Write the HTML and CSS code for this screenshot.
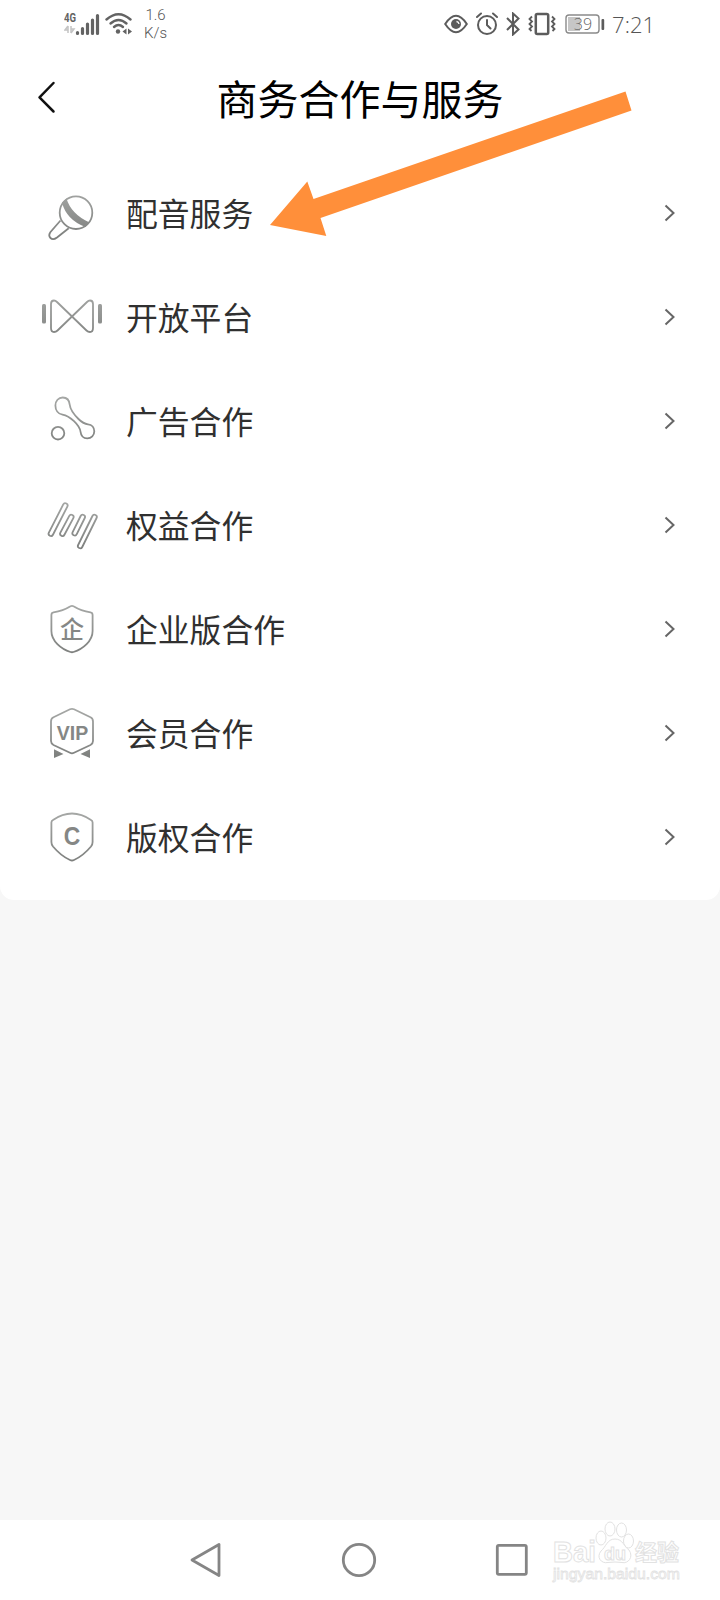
FILE: index.html
```html
<!DOCTYPE html>
<html lang="zh-CN">
<head>
  <meta charset="UTF-8">
  <title>商务合作与服务</title>
  <link rel="stylesheet" href="styles.css">
</head>
<body>
  <svg class="defs" width="0" height="0">
    <defs>
      <linearGradient id="metal" gradientUnits="userSpaceOnUse" x1="0" y1="6" x2="0" y2="58">
        <stop offset="0" stop-color="#a6a8a6"/>
        <stop offset="1" stop-color="#7c7e7c"/>
      </linearGradient>
    </defs>
  </svg>

  <div class="card">
    <div class="status">
      <div class="status-left">
        <svg width="36" height="26" viewBox="0 0 36 26">
          <text class="net" x="0" y="11" textLength="12" lengthAdjust="spacingAndGlyphs">4G</text>
          <path d="M4 15v7M4 15l-3 4h3M7 15v7M7 22l3-4h-3" fill="none" stroke="#c4c4c4" stroke-width="1.5"/>
          <path d="M13.500 21.500v1M18.500 17.500v5M23.500 13v9.500M28.500 9v13.500M33.500 4.500v18" fill="none" stroke="#636363" stroke-width="3.200" stroke-linecap="round"/>
        </svg>
        <svg class="wifi" width="28" height="24" viewBox="0 0 28 24">
          <g fill="none" stroke="#636363" stroke-width="2.400" stroke-linecap="round">
            <path d="M1.500 7.500Q13.500-3 25.500 7.500"/>
            <path d="M5.500 11.500Q13.500 4.500 21.500 11.500"/>
            <path d="M9 15Q13.500 11 18 15"/>
          </g>
          <circle cx="13" cy="19.500" r="2.200" fill="#636363"/>
          <path d="M21.500 16.500v6l-4-3zM23 16.500v6l4-3z" fill="#636363"/>
        </svg>
        <div class="speed">1.6<br>K/s</div>
      </div>
      <div class="status-right">
        <svg width="24" height="20" viewBox="0 0 24 20" fill="none" stroke="#5c5c5c">
          <path d="M1.200 10Q12-6.500 22.800 10Q12 26.500 1.200 10z" stroke-width="2"/>
          <circle cx="12" cy="10" r="5" fill="#5c5c5c" stroke="none"/>
          <path d="M12.500 7.500a3 3 0 0 1 2.500 2.500" stroke="#fff" stroke-width="1.300"/>
        </svg>
        <svg width="22" height="24" viewBox="0 0 22 24" fill="none" stroke="#5c5c5c" stroke-width="2" stroke-linecap="round">
          <circle cx="11" cy="13" r="9"/>
          <path d="M11 8v5l3.500 3.500M1 5l4-3.500M21 5l-4-3.500"/>
        </svg>
        <svg width="14" height="24" viewBox="0 0 14 24" fill="none" stroke="#5c5c5c" stroke-width="2">
          <path d="M1 6l11.500 11.500L7 22.500V1.500l5.500 5L1 18"/>
        </svg>
        <svg width="28" height="24" viewBox="0 0 28 24" fill="none" stroke="#5c5c5c">
          <rect x="7.800" y="2" width="12.400" height="20" rx="1.500" stroke-width="2.500"/>
          <path d="M4 4.500l-2.500 2.500L4 9.500l-2.500 2.500L4 14.500l-2.500 2.500L3.500 19M24 4.500l2.500 2.500L24 9.500l2.500 2.500L24 14.500l2.500 2.500L24.500 19" stroke-width="1.800"/>
        </svg>
        <svg class="battery" width="40" height="20" viewBox="0 0 40 20">
          <rect x="3" y="3" width="12" height="14" fill="#c6c6c6"/>
          <rect x="1" y="1" width="33" height="18" rx="3" fill="none" stroke="#8a8a8a" stroke-width="1.400"/>
          <rect x="36.500" y="5" width="2.700" height="11" rx="1" fill="#5c5c5c"/>
          <text class="level" x="18" y="15.500" text-anchor="middle">39</text>
        </svg>
        <span class="time">7:21</span>
      </div>
    </div>

    <div class="header">
      <svg class="back" width="20" height="34" viewBox="0 0 20 34">
        <path d="M17.500 3L3.500 17.300L17.500 31.500" fill="none" stroke="#111" stroke-width="2.500" stroke-linecap="round" stroke-linejoin="round"/>
      </svg>
      <h1>商务合作与服务</h1>
    </div>

    <ul class="list">
      <li>
        <svg class="icon" viewBox="0 0 64 64">
          <circle cx="36" cy="30.700" r="16.300"/>
          <path class="solid" d="M26.500 16.500Q31 32 49.500 40.500L45.500 45Q26.500 38 22 20.500z"/>
          <path d="M20.500 38.500L10.500 50Q8 53.500 10.500 56Q13 58.500 17 55.500L28.700 46.200"/>
        </svg>
        <span class="name">配音服务</span>
        <svg class="more" viewBox="0 0 12 18"><path d="M1.500 1.500L9.500 9L1.500 16.500"/></svg>
      </li>
      <li>
        <svg class="icon" viewBox="0 0 64 64">
          <rect class="solid" x="2" y="18" width="4" height="19.500" rx="1.500"/>
          <rect class="solid" x="58" y="18" width="4" height="19.500" rx="1.500"/>
          <path d="M11 18Q11 14.500 14 14.500Q15.500 14.500 17 16L46.500 44.500Q48 46 50 46Q53 46 53 42V18Q53 14.500 50 14.500Q48.500 14.500 47 16L17.500 44.500Q16 46 14 46Q11 46 11 42z"/>
        </svg>
        <span class="name">开放平台</span>
        <svg class="more" viewBox="0 0 12 18"><path d="M1.500 1.500L9.500 9L1.500 16.500"/></svg>
      </li>
      <li>
        <svg class="icon" viewBox="0 0 64 64">
          <circle cx="18" cy="43.200" r="6.300"/>
          <path d="M29.800 15C30.300 20 34 24.500 38.500 29C42 32.500 44.500 34 48 34.300C52 34.700 54.300 37.800 54.300 41.300C54.300 45.300 51.300 48.300 47.300 48.300C43.300 48.300 41 45.500 40.600 42C40 37.500 37.500 34.500 34 31.200C30 27.300 26.500 25.200 22.500 24.600C18 24 15.400 20 15.400 15.500C15.400 10.800 18.500 7.500 22.700 7.500C26.700 7.500 29.400 10.500 29.800 15z"/>
        </svg>
        <span class="name">广告合作</span>
        <svg class="more" viewBox="0 0 12 18"><path d="M1.500 1.500L9.500 9L1.500 16.500"/></svg>
      </li>
      <li>
        <svg class="icon" viewBox="0 0 64 64">
          <path class="bar" d="M25.300 11.500L10.900 39.700M31.300 23L22.400 39.700M42.700 23L34.700 39.200M54.500 23L40.200 52"/>
          <path class="bar-gap" d="M25.300 11.500L10.900 39.700M31.300 23L22.400 39.700M42.700 23L34.700 39.200M54.500 23L40.200 52"/>
        </svg>
        <span class="name">权益合作</span>
        <svg class="more" viewBox="0 0 12 18"><path d="M1.500 1.500L9.500 9L1.500 16.500"/></svg>
      </li>
      <li>
        <svg class="icon" viewBox="0 0 64 64">
          <path d="M30.500 8.300Q32 7.300 33.500 8.300Q41 13 50.500 14.300Q52.600 14.600 52.600 17V33C52.600 43 43 51 33.500 54Q32 54.500 30.500 54C21 51 11.400 43 11.400 33V17Q11.400 14.600 13.500 14.300Q23 13 30.500 8.300z"/>
          <text class="mark-cn" x="32" y="39.500" text-anchor="middle">企</text>
        </svg>
        <span class="name">企业版合作</span>
        <svg class="more" viewBox="0 0 12 18"><path d="M1.500 1.500L9.500 9L1.500 16.500"/></svg>
      </li>
      <li>
        <svg class="icon" viewBox="0 0 64 64">
          <path d="M30 7.300Q32 6.300 34 7.300L50.500 15.300Q53 16.500 53 19.500V39Q53 41.500 50.500 43L34 50.800Q32 51.800 30 50.800L13.500 43Q11 41.500 11 39V19.500Q11 16.500 13.500 15.300z"/>
          <text class="mark-vip" x="32.500" y="38" text-anchor="middle">VIP</text>
          <path class="solid" d="M14 47.300L23.500 52L14 56zM50 47.300L40.500 52L50 56z"/>
        </svg>
        <span class="name">会员合作</span>
        <svg class="more" viewBox="0 0 12 18"><path d="M1.500 1.500L9.500 9L1.500 16.500"/></svg>
      </li>
      <li>
        <svg class="icon" viewBox="0 0 64 64">
          <path d="M11.400 16.500Q11.400 14.800 13 14Q32 1 51 14Q52.600 14.800 52.600 16.500V36Q52.600 38.500 51 40.500Q43 50 34 54Q32 55 30 54Q21 50 13 40.500Q11.400 38.500 11.400 36z"/>
          <text class="mark-c" x="32" y="38.800" text-anchor="middle" textLength="16.500" lengthAdjust="spacingAndGlyphs">C</text>
        </svg>
        <span class="name">版权合作</span>
        <svg class="more" viewBox="0 0 12 18"><path d="M1.500 1.500L9.500 9L1.500 16.500"/></svg>
      </li>
    </ul>
  </div>

  <div class="navbar">
    <svg width="34" height="38" viewBox="0 0 34 38"><path d="M3 19L30 3.500V34.500z"/></svg>
    <svg width="38" height="38" viewBox="0 0 38 38"><circle cx="19" cy="19" r="15.700"/></svg>
    <svg width="34" height="34" viewBox="0 0 34 34"><rect x="2.300" y="2.300" width="29" height="29" rx="1.500"/></svg>
  </div>

  <svg class="arrow" width="366" height="150" viewBox="268 89 366 150">
    <path d="M270 225L307.300 181.500L313.500 199L625.500 91.500L631.500 110.500L320.500 218L326.300 236z" fill="#ff8f3a"/>
  </svg>

  <svg class="watermark" width="132" height="66" viewBox="550 1520 132 66">
    <text class="wm-logo" x="553" y="1562" textLength="43" lengthAdjust="spacingAndGlyphs">Bai</text>
    <ellipse cx="601" cy="1538" rx="5" ry="7"/>
    <ellipse cx="610" cy="1529" rx="5" ry="7"/>
    <ellipse cx="621.500" cy="1530" rx="5" ry="7"/>
    <ellipse cx="628.500" cy="1541" rx="5" ry="7"/>
    <path d="M615 1539C623 1539 624 1547 629 1550C634 1557 628 1564 622 1562.500Q615 1561.500 608 1562.500C601 1564 596 1557 601 1551C606 1547 607 1539 615 1539z"/>
    <text class="wm-du" x="604" y="1560" textLength="22" lengthAdjust="spacingAndGlyphs">du</text>
    <text class="wm-cn" x="635" y="1560">经验</text>
    <text class="wm-url" x="553" y="1579" textLength="127" lengthAdjust="spacingAndGlyphs">jingyan.baidu.com</text>
  </svg>
</body>
</html>
```

FILE: styles.css
```css
* {
  box-sizing: border-box;
}
body {
  margin: 0;
  height: 1600px;
  display: flex;
  flex-direction: column;
  justify-content: space-between;
  position: relative;
  background: #f7f7f7;
  font-family: "Noto Sans CJK SC", sans-serif;
}
svg {
  display: block;
  flex: none;
}
.defs {
  position: absolute;
}
.card {
  height: 900px;
  background: #fff;
  border-radius: 0 0 14px 14px;
}

/* status bar */
.status {
  height: 48px;
  padding: 0 65px 0 64px;
  display: flex;
  justify-content: space-between;
  align-items: center;
}
.status-left, .status-right {
  display: flex;
  align-items: center;
}
.wifi {
  margin: 0 0 0 5px;
}
.net {
  font: bold 13px Roboto, sans-serif;
  fill: #636363;
}
.speed {
  margin-left: 11px;
  font: 300 15px/18px Roboto, sans-serif;
  color: #555;
  text-align: center;
}
.status-right {
  gap: 8px;
}
.status-right .battery {
  margin-left: 1px;
}
.level {
  font: 300 16px "Open Sans", sans-serif;
  fill: #666;
}
.time {
  margin-left: -1px;
  font: 300 22px/48px "Open Sans", sans-serif;
  color: #555;
}

/* title */
.header {
  height: 114px;
  padding: 0 36px;
  display: grid;
  grid-template-columns: 20px 1fr 20px;
  align-items: start;
}
.back {
  margin-top: 32px;
}
h1 {
  margin: 19px 0 0;
  font-size: 41px;
  line-height: 60px;
  font-weight: 400;
  color: #000;
  text-align: center;
}

/* menu */
.list {
  margin: 0;
  padding: 0;
  list-style: none;
}
.list li {
  height: 104px;
  padding: 0 44px 0 40px;
  display: flex;
  align-items: center;
}
.icon {
  width: 64px;
  height: 64px;
  fill: none;
  stroke: url(#metal);
  stroke-width: 1.8;
}
.icon text {
  fill: #858785;
  stroke: none;
}
.icon .solid {
  fill: url(#metal);
  stroke: none;
}
.icon .bar {
  stroke-width: 6.4;
  stroke-linecap: round;
}
.icon .bar-gap {
  stroke: #fff;
  stroke-width: 2.8;
  stroke-linecap: round;
}
.mark-cn {
  font: 500 24px "Noto Sans CJK SC", sans-serif;
}
.mark-vip {
  font: bold 19.5px "Liberation Sans", sans-serif;
}
.mark-c {
  font: bold 25px "Liberation Sans", sans-serif;
}
.name {
  flex: 1;
  margin: -4px 0 0 22px;
  font-size: 31.8px;
  line-height: 48px;
  color: #303030;
}
.more {
  width: 12px;
  height: 18px;
  margin-top: -2px;
  fill: none;
  stroke: #666;
  stroke-width: 2;
}

/* system navigation */
.navbar {
  height: 80px;
  padding: 0 191px 0 189px;
  display: flex;
  justify-content: space-between;
  align-items: center;
  background: #fff;
}
.navbar svg {
  fill: none;
  stroke: #858585;
  stroke-width: 2.8;
  stroke-linejoin: round;
}

/* overlays */
.arrow {
  position: absolute;
  left: 268px;
  top: 89px;
}
.watermark {
  position: absolute;
  left: 550px;
  top: 1520px;
  fill: #fff;
  stroke: #e2e2e2;
  stroke-width: 1;
}
.wm-logo {
  font: bold 30px "Liberation Sans", sans-serif;
}
.wm-du {
  font: bold 19px "Liberation Sans", sans-serif;
}
.wm-cn {
  font: bold 22px "Noto Sans CJK SC", sans-serif;
}
.wm-url {
  font: 15.5px "Liberation Sans", sans-serif;
  stroke-width: 0.8;
}
```
